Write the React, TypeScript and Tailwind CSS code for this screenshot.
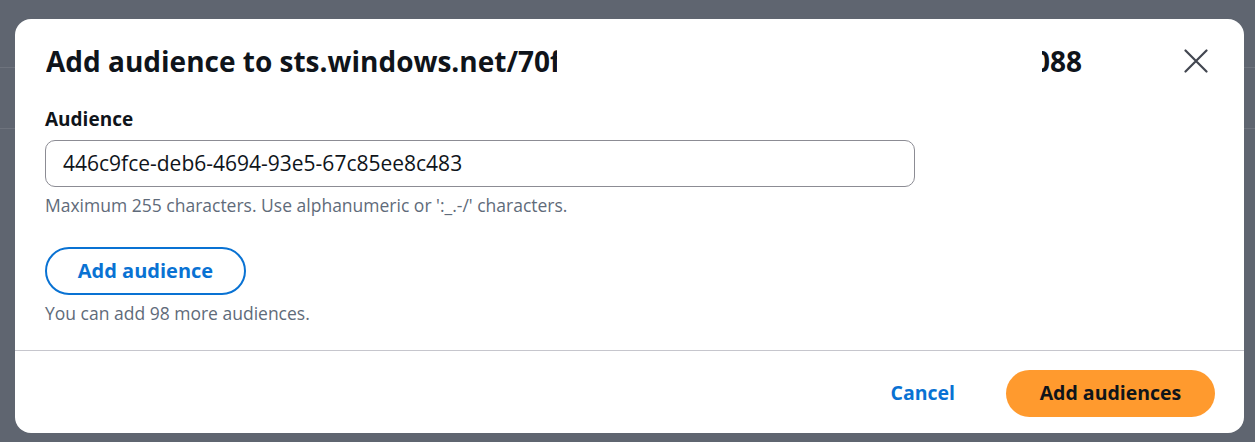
const font = { fontFamily: '"Open Sans", "Noto Sans", sans-serif' };

function CloseIcon() {
  return (
    <svg width="24" height="24" viewBox="0 0 24 24" fill="none" stroke="currentColor" strokeWidth="2.2" strokeLinecap="round">
      <path d="M1.5 1.5l21 21M22.5 1.5l-21 21" />
    </svg>
  );
}

export default function App() {
  return (
    <div className="relative h-[442px] w-[1255px] overflow-hidden bg-[#5f6570]" style={font}>
      {/* dimmed page behind the modal */}
      <div className="absolute left-0 right-0 top-[67px] h-px bg-[#6e737d]" />
      <div className="absolute left-0 right-0 top-[128px] h-px bg-[#6e737d]" />

      <div className="relative ml-[15px] mt-[19px] flex h-[414px] w-[1229px] flex-col rounded-[16px] bg-white">
        {/* header */}
        <div className="flex items-center pl-[31px] pr-[36px] pt-[24px]">
          <h2 className="flex h-[36px] items-center text-[28px] font-bold leading-[36px] text-[#0f141a]">
            <span className="block w-[511px] overflow-hidden whitespace-nowrap">Add audience to sts.windows.net/70f</span>
            <span className="ml-[485px] flex w-[40px] justify-end overflow-hidden whitespace-nowrap">088</span>
          </h2>
          <button className="ml-auto flex h-[24px] w-[24px] items-center justify-center text-[#424650]">
            <CloseIcon />
          </button>
        </div>

        {/* body */}
        <div className="flex flex-col pl-[30px] pt-[28px]">
          <label className="text-[19px] font-bold leading-[24px] text-[#0f141a]">Audience</label>
          <div className="mt-[9px] flex h-[47px] w-[870px] items-center rounded-[10px] border border-[#8c8c94] px-[17px] text-[21px] text-[#0f141a]">
            446c9fce-deb6-4694-93e5-67c85ee8c483
          </div>
          <p className="mt-[7px] text-[17.5px] leading-[22px] text-[#5f6b7a]">
            Maximum 255 characters. Use alphanumeric or ':_.-/' characters.
          </p>
          <button className="mt-[31px] flex h-[48px] w-[201px] items-center justify-center rounded-full border-2 border-[#0972d3] text-[20px] font-bold text-[#0972d3]">
            Add audience
          </button>
          <p className="mt-[7px] text-[17.5px] leading-[22px] text-[#5f6b7a]">You can add 98 more audiences.</p>
        </div>

        {/* footer */}
        <div className="mt-auto flex h-[83px] items-center justify-end gap-[51px] border-t border-[#c6c6cd] pr-[29px] pt-[2px]">
          <button className="text-[19.5px] font-bold text-[#0972d3]">Cancel</button>
          <button className="flex h-[47px] w-[209px] items-center justify-center rounded-full bg-[#ff9a2e] text-[19.5px] font-bold text-[#0f141a]">
            Add audiences
          </button>
        </div>
      </div>
    </div>
  );
}
